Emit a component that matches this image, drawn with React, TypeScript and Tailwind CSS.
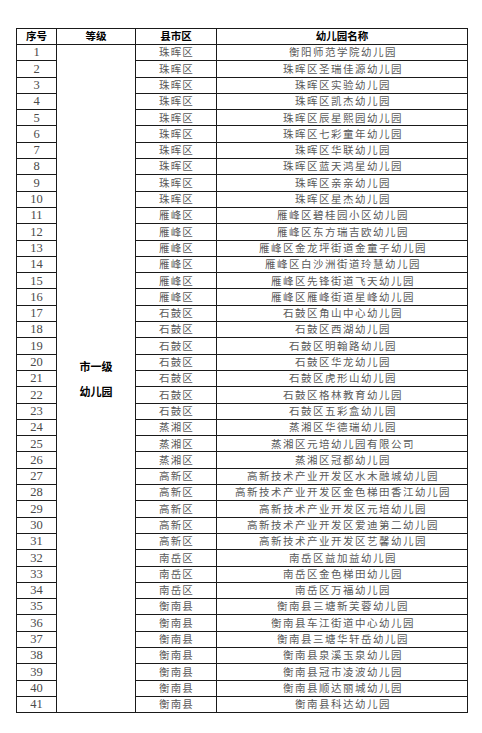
import React from "react";

const rows: [string, string][] = [
  ["珠晖区", "衡阳师范学院幼儿园"],
  ["珠晖区", "珠晖区圣瑞佳源幼儿园"],
  ["珠晖区", "珠晖区实验幼儿园"],
  ["珠晖区", "珠晖区凯杰幼儿园"],
  ["珠晖区", "珠晖区辰星熙园幼儿园"],
  ["珠晖区", "珠晖区七彩童年幼儿园"],
  ["珠晖区", "珠晖区华联幼儿园"],
  ["珠晖区", "珠晖区蓝天鸿星幼儿园"],
  ["珠晖区", "珠晖区亲亲幼儿园"],
  ["珠晖区", "珠晖区星杰幼儿园"],
  ["雁峰区", "雁峰区碧桂园小区幼儿园"],
  ["雁峰区", "雁峰区东方瑞吉欧幼儿园"],
  ["雁峰区", "雁峰区金龙坪街道金童子幼儿园"],
  ["雁峰区", "雁峰区白沙洲街道玲慧幼儿园"],
  ["雁峰区", "雁峰区先锋街道飞天幼儿园"],
  ["雁峰区", "雁峰区雁峰街道星峰幼儿园"],
  ["石鼓区", "石鼓区角山中心幼儿园"],
  ["石鼓区", "石鼓区西湖幼儿园"],
  ["石鼓区", "石鼓区明翰路幼儿园"],
  ["石鼓区", "石鼓区华龙幼儿园"],
  ["石鼓区", "石鼓区虎形山幼儿园"],
  ["石鼓区", "石鼓区格林教育幼儿园"],
  ["石鼓区", "石鼓区五彩盒幼儿园"],
  ["蒸湘区", "蒸湘区华德瑞幼儿园"],
  ["蒸湘区", "蒸湘区元培幼儿园有限公司"],
  ["蒸湘区", "蒸湘区冠都幼儿园"],
  ["高新区", "高新技术产业开发区水木融城幼儿园"],
  ["高新区", "高新技术产业开发区金色梯田香江幼儿园"],
  ["高新区", "高新技术产业开发区元培幼儿园"],
  ["高新区", "高新技术产业开发区爱迪第二幼儿园"],
  ["高新区", "高新技术产业开发区艺馨幼儿园"],
  ["南岳区", "南岳区益加益幼儿园"],
  ["南岳区", "南岳区金色梯田幼儿园"],
  ["南岳区", "南岳区万福幼儿园"],
  ["衡南县", "衡南县三塘新芙蓉幼儿园"],
  ["衡南县", "衡南县车江街道中心幼儿园"],
  ["衡南县", "衡南县三塘华轩岳幼儿园"],
  ["衡南县", "衡南县泉溪玉泉幼儿园"],
  ["衡南县", "衡南县冠市凌波幼儿园"],
  ["衡南县", "衡南县顺达丽城幼儿园"],
  ["衡南县", "衡南县科达幼儿园"],
];

const cjk = "font-['Noto_Sans_CJK_SC',sans-serif]";
const serif = "font-['Liberation_Serif','Noto_Sans_CJK_SC',serif]";

export default function App() {
  return (
    <div className="w-[482px] h-[733px] bg-white pt-[28px] pl-[16px]">
      <table className="table-fixed border-collapse border border-[#1a1a1a] w-[451px]">
        <colgroup>
          <col className="w-[40px]" />
          <col className="w-[79px]" />
          <col className="w-[81px]" />
          <col className="w-[251px]" />
        </colgroup>
        <thead>
          <tr className="h-[16px]">
            {["序号", "等级", "县市区", "幼儿园名称"].map((h) => (
              <th
                key={h}
                className={`${cjk} border border-[#1a1a1a] p-0 text-[10.5px] leading-none font-bold text-black text-center`}
              >
                {h}
              </th>
            ))}
          </tr>
        </thead>
        <tbody>
          {rows.map(([county, name], i) => (
            <tr key={i} className="h-[16.3px]">
              <td
                className={`${serif} border border-[#1a1a1a] p-0 text-[12.5px] leading-none text-[#4a4a4a] text-center`}
              >
                {i + 1}
              </td>
              {i === 0 && (
                <td
                  rowSpan={rows.length}
                  className={`${cjk} border border-[#1a1a1a] p-0 text-center align-middle`}
                >
                  <div className="flex flex-col items-center gap-[11px] text-[11px] leading-[14px] font-bold text-black">
                    <span>市一级</span>
                    <span>幼儿园</span>
                  </div>
                </td>
              )}
              <td
                className={`${cjk} border border-[#1a1a1a] p-0 pl-[1px] text-[10.5px] leading-none tracking-[1.2px] text-[#5a5a5a] text-center`}
              >
                {county}
              </td>
              <td
                className={`${cjk} border border-[#1a1a1a] p-0 pl-[2px] text-[10.5px] leading-none tracking-[1.5px] text-[#5a5a5a] text-center`}
              >
                {name}
              </td>
            </tr>
          ))}
        </tbody>
      </table>
    </div>
  );
}
